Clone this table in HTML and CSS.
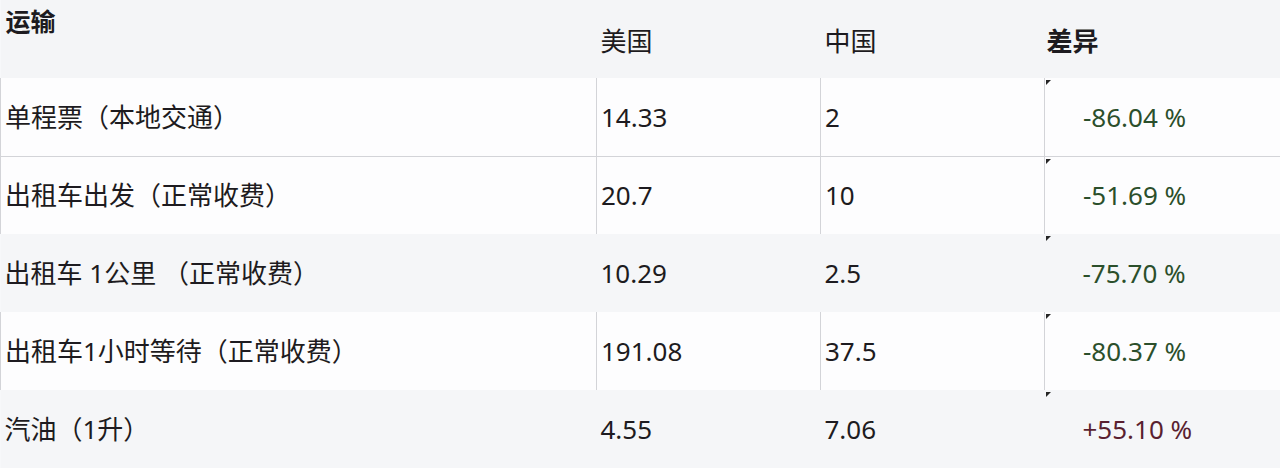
FILE: index.html
```html
<!DOCTYPE html>
<html lang="zh-CN">
<head>
<meta charset="utf-8">
<title>运输</title>
<link rel="stylesheet" href="styles.css">
</head>
<body>
<table class="cost-table">
  <colgroup>
    <col class="c-item">
    <col class="c-num">
    <col class="c-num">
    <col class="c-diff">
  </colgroup>
  <thead>
    <tr class="row-head">
      <th class="cell-title">运输</th>
      <th class="cell-col">美国</th>
      <th class="cell-col">中国</th>
      <th class="cell-col cell-diffhead">差异</th>
    </tr>
  </thead>
  <tbody>
    <tr class="row-white row-lined">
      <td class="cell-item">单程票（本地交通）</td>
      <td class="cell-num">14.33</td>
      <td class="cell-num">2</td>
      <td class="cell-diff neg">-86.04 %</td>
    </tr>
    <tr class="row-white">
      <td class="cell-item">出租车出发（正常收费）</td>
      <td class="cell-num">20.7</td>
      <td class="cell-num">10</td>
      <td class="cell-diff neg">-51.69 %</td>
    </tr>
    <tr class="row-grey">
      <td class="cell-item">出租车 1公里 （正常收费）</td>
      <td class="cell-num">10.29</td>
      <td class="cell-num">2.5</td>
      <td class="cell-diff neg">-75.70 %</td>
    </tr>
    <tr class="row-white">
      <td class="cell-item">出租车1小时等待（正常收费）</td>
      <td class="cell-num">191.08</td>
      <td class="cell-num">37.5</td>
      <td class="cell-diff neg">-80.37 %</td>
    </tr>
    <tr class="row-grey">
      <td class="cell-item">汽油（1升）</td>
      <td class="cell-num">4.55</td>
      <td class="cell-num">7.06</td>
      <td class="cell-diff pos">+55.10 %</td>
    </tr>
  </tbody>
</table>
</body>
</html>
```

FILE: styles.css
```css
html, body {
  margin: 0;
  padding: 0;
  background: #f7f8fa;
}

.cost-table {
  width: 1280px;
  border-collapse: collapse;
  table-layout: fixed;
  font-family: "Noto Sans", "Noto Sans CJK SC", sans-serif;
  font-size: 26px;
  color: #1d1b20;
}

.c-item { width: 596px; }
.c-num { width: 224px; }
.c-diff { width: 236px; }

.cost-table th,
.cost-table td {
  height: 78px;
  padding: 0 0 0 4px;
  text-align: left;
  vertical-align: middle;
  line-height: 30px;
  white-space: nowrap;
  box-sizing: border-box;
}

.row-head {
  background: #f4f5f7;
}

.row-head th {
  font-weight: normal;
  padding-top: 4px;
}

.row-head .cell-title {
  font-weight: bold;
  vertical-align: top;
  padding-top: 6px;
  padding-left: 5px;
  font-size: 25px;
}

.row-head .cell-diffhead {
  font-weight: bold;
  padding-left: 2px;
}

.row-white {
  background: #fdfdfe;
}

.row-white td {
  border-left: 1px solid #d3d4d8;
  border-right: 1px solid #d3d4d8;
}

.row-lined td {
  border-bottom: 1px solid #d3d4d8;
}

.row-grey {
  background: #f5f6f8;
}

.cell-diff {
  position: relative;
  padding-left: 38px !important;
}

.cell-diff::before {
  content: "";
  position: absolute;
  left: 1px;
  top: 2px;
  width: 0;
  height: 0;
  border-top: 5px solid #262626;
  border-right: 5px solid transparent;
}

.row-white .cell-diff {
  border-left-color: #b9babe;
}

.neg { color: #2b4f2b; }
.pos { color: #5a1f30; }
```
